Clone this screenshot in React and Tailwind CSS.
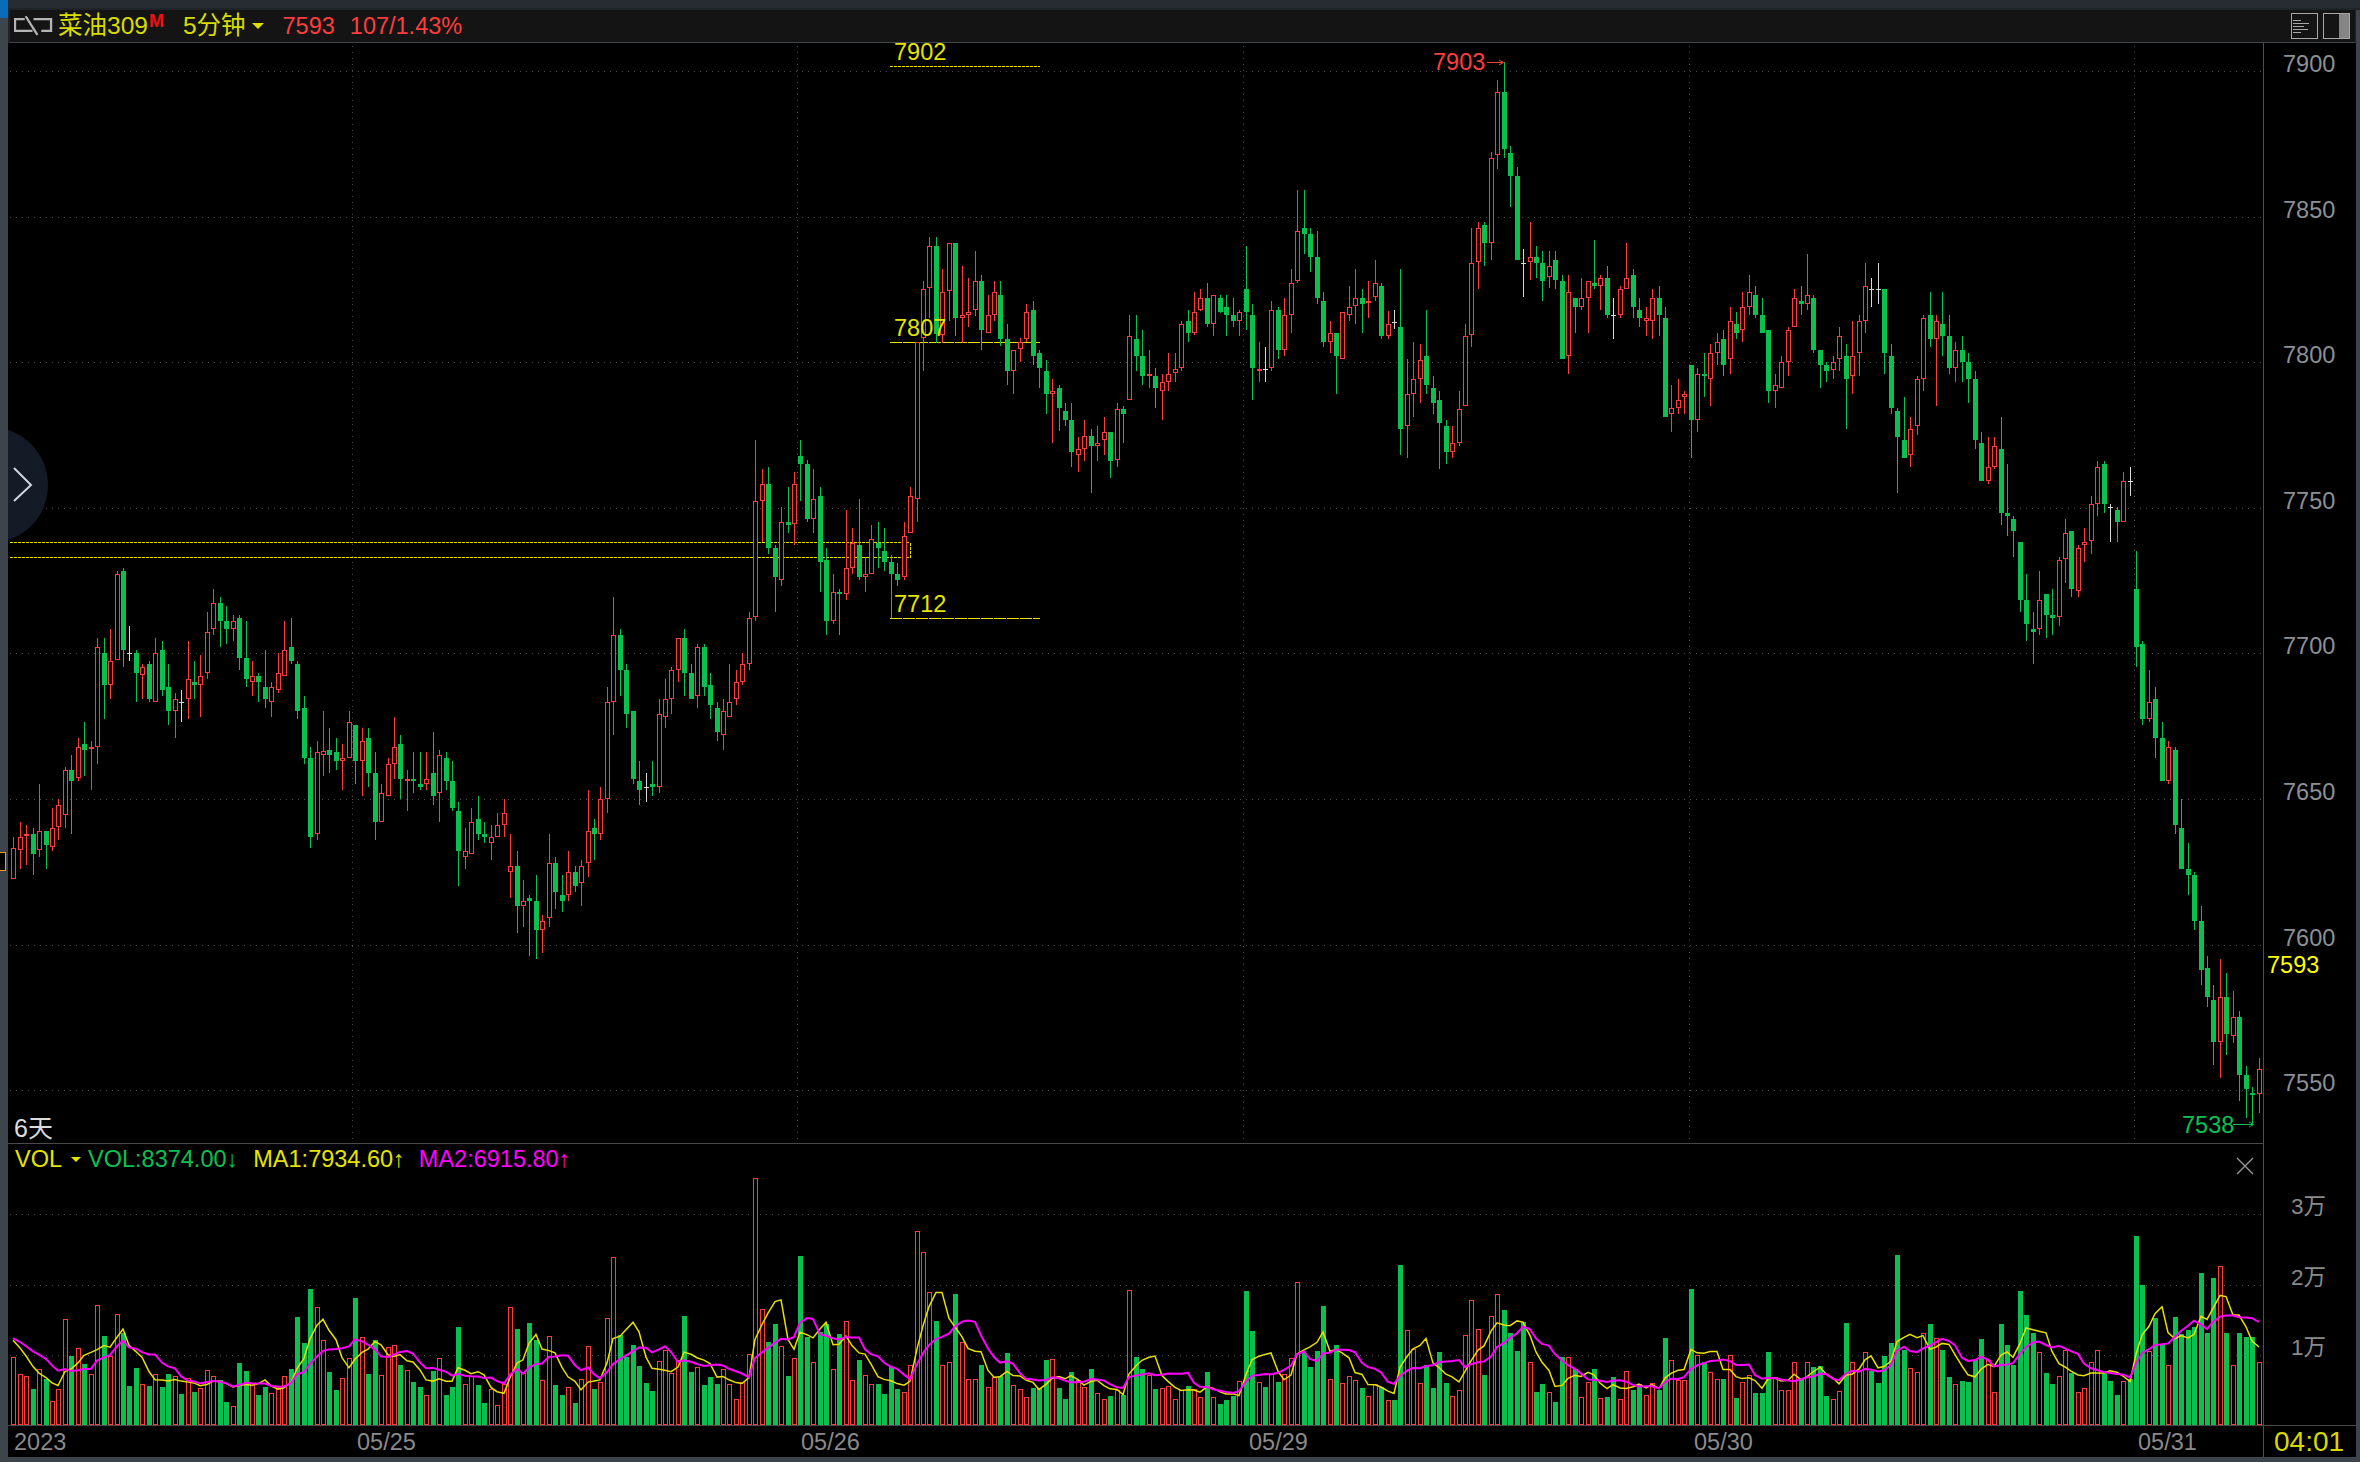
import React from "react";

const RED = "#ff3d3d";
const GREEN = "#0cc050";
const WHITE = "#d8d8d8";
const YEL = "#e4e400";

const segs = [
  [(v) => 400 + v / 3, `R1312 1345 1438 1438,R1267 1312 1351 1407,R1276 1303 1309 1396,G1285 1303 1361 1424,R1153 1294 1351 1370,G1293 1293 1335 1407,R1225 1285 1342 1352,R1198 1216 1282 1319,R1102 1111 1246 1284,G1066 1110 1142 1301,R1015 1042 1135 1142,G966 1032 1049 1128,R1024 1042 1048 1169,R714 742 1040 1091,G714 760 855 957,R687 784 854 897,R514 523 781 781,G505 514 749 801,W679 760 761 782,G751 760 819 906,R793 802 826 897,G784 793 897 906,R714 760 905 905,G724 751 870 888,G793 861 933 975,R880 898 932 1014,W870 907 908 966,R724 838 896 957,G784 846 855 897,R766 829 854 951,R637 697 818 837,R568 610 686 705,G592 610 662 741,G619 664 687 732,R646 664 686 723,G646 655 774 810,G664 774 836 861,R784 829 845 888,G820 829 846 906,G751 861 897 924,R847 862 905 951,R760 820 869 879,R664 751 827 827,G655 742 783 792,G784 793 933 957,G888 924 1074 1092,G1042 1075 1310 1344,R1024 1057 1301 1320,R933 1052 1064 1128,G985 1050 1065 1119,G1015 1057 1083 1110,R1033 1075 1082 1169,R934 967 1073 1073,G975 975 1083 1152,R985 1024 1082 1187,G985 1015 1119 1161,G1057 1119 1266 1320,R1153 1180 1265 1265,R1075 1093 1187 1187,R952 1042 1091 1137`],
  [(v) => 460 + v / 3, `G825 852 957 1018,R930 957 962 1053,G876 957 963 999,G876 972 981 990,R876 958 971 990,G816 939 1008 1035,R870 886 998 1086,G876 894 963 990,G903 963 1044 1053,G1026 1053 1173 1278,R1104 1174 1190 1227,R1045 1087 1181 1181,G1008 1077 1122 1140,G1086 1122 1131 1149,R1095 1132 1148 1200,R1059 1096 1130 1130,R1017 1060 1094 1131,R1122 1219 1235 1314,G1173 1218 1338 1419,R1260 1324 1337 1401,G1305 1314 1323 1488,G1245 1323 1410 1497,R1365 1384 1409 1479,R1122 1210 1373 1401,G1191 1209 1296 1347,G1245 1305 1323 1356,R1173 1237 1304 1323,G1218 1236 1278 1296,R1200 1219 1268 1338,R990 1114 1208 1251,G1077 1104 1122 1200,R981 1018 1121 1140,R681 727 1016 1059,R411 526 725 825,G507 525 630 708,G612 630 762 804,G753 753 957 972,G903 963 990 1035,W939 982 983 1026,G903 972 981 1008,R717 763 980 999,R657 718 770 804,R621 631 716 762,R535 535 629 666,G507 534 639 708,G612 639 717 717,R552 562 707 744,G552 561 681 708,G639 675 735 777,G726 744 816 843,R717 754 824 870,R612 727 770 770,R630 667 716 735,R580 613 665 675,R457 475 611 630,R-60 124 472 483,R27 72 122 247,G21 72 264 282,G255 264 351 456,R141 187 359 378,G81 186 195 219,R36 73 193 255,G-60 -12 12 123,G0 12 177 186,R27 118 176 219,G81 108 306 396,G264 300 483 525,R342 397 482 492,G387 396 402 525,R150 325 401 420,R204 248 323 342,G117 255 351 360,R291 343 350 396,R195 238 341 341,G186 248 264 324,G204 273 306 333`],
  [(v) => 71 + (v - 126) / 2.447, `G1310 1328 1356 1465,G1330 1358 1372 1386,R1230 1265 1364 1372,R1145 1167 1256 1256,R790 790 1173 1230,R640 660 780 860,R532 555 658 730,G532 554 770 792,R610 667 772 792,R547 547 665 737,G546 546 730 775,R603 724 730 792,R632 716 722 752,R567 640 710 725,G626 640 759 808,R673 724 766 766,R640 667 722 738,G640 674 782 800,G745 782 860 894,R809 809 859 916,R780 790 807 838,R696 716 781 790,G688 710 823 845,G809 816 853 902,G832 860 916 965,R880 909 916 1036,G894 902 951 1008,G938 958 980 995,G938 980 1058 1094,R1022 1052 1065 1107,R980 1018 1050 1080,G1002 1018 1044 1158,R994 1036 1043 1080,R973 1010 1028 1065,G1010 1010 1080 1122,R938 952 1079 1094,G946 952 965 1036,R723 775 930 930,G723 782 823 860,G760 823 872 894,R809 868 872 902,G853 872 902 951,R867 888 908 980,R816 868 887 908,R816 854 866 887,R738 746 852 860,G710 738 767 789,R667 716 767 773,R659 682 710 714,G645 682 745 752,R674 674 745 775,G674 682 716 718,G674 703 723 775,G682 723 738 752,R710 716 737 775,G554 659 716 760,G696 723 853 931,R790 854 860 888,W802 854 855 888,R688 711 853 860,G703 710 808 830,R681 724 808 823,R610 645 722 768,R416 518 640 645,G416 510 524 573,G510 524 581 617,G518 581 681 695,G667 688 788 802,R738 768 788 816,G767 767 823 916,R716 716 830 830,R653 704 722 738,R610 682 702 745,G659 682 695 767,R640 689 694 731,R589 645 680 688,G645 652 774 781,R714 746 774 781,W711 739 740 758,G610 752 1002 1066,R831 916 994 1073,R790 880 916 973,R795 832 880 938,G710 823 894 916,G872 902 938 966,G908 931 987 1100,G980 995 1058 1087,R995 1036 1058 1073,R908 952 1036 1044,R745 775 945 945,R510 596 773 802,R495 510 594 660,G495 502 546 603,R325 339 546 589,R148 177 332 367,G104 177 318 338,G310 326 382 460,G360 382 588 588,W561 596 597 680,R495 582 594 638,G554 581 596 632,G567 596 639 688,R566 604 631 658,G567 589 638 660`],
  [(v) => 180 + v / 3, `G285 303 537 537,R285 337 527 582,G354 354 381 459,R294 355 380 390,R304 304 353 459,G180 309 318 327,R285 295 317 390,G258 294 405 414,W354 406 407 477,R318 328 404 414,R189 295 326 326,G267 285 381 414,G354 390 414 441,R381 415 422 468,R327 355 422 477,G318 354 405 468,G381 414 711 711,R615 685 701 756,R597 661 683 702,R633 643 651 702,G555 555 720 834,R564 583 719 756,G519 582 588 651,R492 520 596 678,R459 487 518 555,G450 477 555 588,R381 424 536 582,G396 432 459 477,R336 382 449 486,R285 337 380 405,G318 345 405 414,G354 405 459 459,G450 450 633 669,R582 616 632 684,R528 547 623 623,R441 451 545 588,R327 355 440 440,G318 363 372 405,R222 346 371 390,G345 354 510 519,G510 510 555 624,G546 555 573 606,R528 547 571 597,R441 469 536 573,G492 528 597 747,R423 529 587 642,R405 424 518 588,R249 319 422 459,W294 328 329 381,W249 328 329 372,G327 327 519 582,G492 528 684 702,G684 693 771 939,G651 780 834 834,R711 748 824 861,R588 598 737 765,R405 415 596 633,G336 405 477 501,R405 424 476 678,G336 432 468 528,G405 468 564 582,R486 511 563 606,G468 510 546 606,G519 546 597 669,G573 597 780 807,G756 789 903 903,R771 862 902 912,R771 799 860 867,G711 807 999 1035,G852 999 1008 1068`],
  [(v) => 220 + v / 3, `G888 897 933 1011,G966 966 1140 1176,G1062 1140 1212 1263,G1176 1227 1236 1332,R1053 1141 1226 1245,G1122 1122 1185 1254,G1107 1185 1194 1245,R1011 1021 1192 1218,R897 940 1018 1089,G933 933 1107 1131,R975 985 1114 1131,R924 966 974 1026,R828 853 964 1002,R723 742 851 888,G723 732 852 879,W852 861 862 966,G861 870 906 966,R756 784 905 905,W741 784 785 828`],
  [(v) => 520 + v / 3, `G93 207 381 441,G363 372 597 615,R450 547 597 606,G501 537 654 714,G606 654 783 783,R663 682 782 792,G681 690 915 942,G837 924 1047 1047,G969 1047 1065 1125,G1056 1065 1203 1230,G1158 1203 1350 1395`],
  [(v) => 944.5 + (v - 124) / 2.797, `G155 190 271 300,G237 280 398 462,R165 271 398 497,G205 271 373 432,R254 327 380 400,G311 327 488 561,G464 488 529 610,G522 538 544 626,R441 473 543 594`],
];

const candles = segs.flatMap(([conv, s]) =>
  s.split(",").map((t) => {
    const c = t[0];
    const [h, o, b, l] = t.slice(1).split(" ").map((n) => Math.round(conv(Number(n))));
    return { c, h, o, b, l };
  })
);

const vol3 = [772,823,829,867,806,837,904,868,658,768,745,792,823,616,708,769,643,700,858,804,853,858,823,861,822,829,882,835,876,865,811,829,840,906,919,790,813,850,885,861,880,861,829,807,651,729,567,622,721,816,870,835,775,594,712,822,720,826,742,736,795,811,846,861,886,813,775,885,861,681,852,827,855,909,868,916,852,622,687,820,669,720,841,709,855,885,862,909,837,739,868];
const vol11 = [665,475,290,525,590,555,618,669,693,603,571,640,600,468,636,622,675,651,672,627,672,717,665,583,55,448,546,492,558,648,595,288,531,607,516,491,627,522,484,660,600,645,672,672,702,621,687,696,615,214,277,397,483,615,606,402,546,657,657,615,681,650,648,579,675,687,711,684,684,600,597,684,717,636,660,681,627,699,717,708,690,705,391,591,627,645,687,684,678,717,690,678,687,711,636,711,732,720,708,663,393,513,666,681,642,666,642,594,366,580,621,573,438,657,555,669,648,660];
const vol12 = [684,708,672,681,721,720,315,510,568,669,615,684,576,669,708,690,526,421,507,645,468,403,450,519,573,486,606,696,672,696,726,591,591,627,711,666,627,714,711,651,717,633,690,672,705,670,690,534,600,660,660,387,585,606,636,657,657,585,714,666,645,699,699,576,651,690,690,606,657,606,621,618,708,717,693,489,606,633,576,633,669,588,549,285,570,624,636,519,492,534,570,651,672,663,666,600,537,600,696,492,555,615,393,465,519,576,639,672,648,570,639,696,684,606,570];
const vol4 = [1320,1342,1381,1342,1335,935,1074,1258,1166,1238,1296,1163,1210,1200,1190,1040,1208,1055,1019,1208,1298,1208,1219,1219,1290];

const vols = [
  ...vol3.map((v) => (975 - v) / 3),
  ...vol11.map((v) => (795 - v) / 3),
  ...vol12.map((v) => (795 - v) / 3),
  ...vol4.map((v) => (1465 - v) / 2.797),
];

const cx = (i) => Math.round(13.3 + 6.452 * i);

const ma = (n) => {
  const pad = Array(n - 1).fill(89);
  const all = [...pad, ...vols];
  return vols.map((_, i) => {
    let s = 0;
    for (let k = 0; k < n; k++) s += all[i + n - 1 - k];
    return s / n;
  });
};

const maPts = (arr) => arr.map((m, i) => `${cx(i)},${(1425 - m).toFixed(1)}`).join(" ");

const gridY = [71, 216.6, 362, 507.7, 653.3, 799, 944.5, 1090];
const gridX = [352, 797, 1243, 1689, 2134];

function Candle({ d, i }) {
  const x = cx(i);
  if (d.c === "W") {
    return (
      <g fill={WHITE}>
        <rect x={x} y={d.h} width="1" height={d.l - d.h} />
        <rect x={x - 2} y={d.o} width="5" height="1" />
      </g>
    );
  }
  if (d.c === "G") {
    return (
      <g fill={GREEN}>
        <rect x={x} y={d.h} width="1" height={Math.max(d.l - d.h, 1)} />
        <rect x={x - 2} y={d.o} width="5" height={Math.max(d.b - d.o, 2)} />
      </g>
    );
  }
  return (
    <g>
      <rect x={x} y={d.h} width="1" height={Math.max(d.o - d.h, 0)} fill={RED} />
      <rect x={x} y={d.b} width="1" height={Math.max(d.l - d.b, 0)} fill={RED} />
      <rect x={x - 1.5} y={d.o + 0.5} width="4" height={Math.max(d.b - d.o - 1, 1)} fill="#000" stroke={RED} strokeWidth="1" />
    </g>
  );
}

function PriceChart() {
  return (
    <svg className="block w-[2255px] h-[1100px]" viewBox="8 43 2255 1100" shapeRendering="crispEdges">
      {gridY.map((y) => (
        <line key={y} x1="10" x2="2262" y1={Math.round(y) + 0.5} y2={Math.round(y) + 0.5} stroke="#4a4a4a" strokeDasharray="1 5" />
      ))}
      {gridX.map((x) => (
        <line key={x} x1={x + 0.5} x2={x + 0.5} y1="46" y2="1143" stroke="#4a4a4a" strokeDasharray="1 5" />
      ))}
      <g stroke={YEL} fill="none">
        <path d="M10 542.5H910V557.5H10" strokeDasharray="3 1" />
        <line x1="890" x2="1040" y1="66.5" y2="66.5" strokeDasharray="3 1" />
        <line x1="890" x2="1040" y1="342.5" y2="342.5" strokeDasharray="12 1" />
        <line x1="890" x2="1040" y1="618.5" y2="618.5" strokeDasharray="12 1" />
      </g>
      {candles.map((d, i) => (
        <Candle key={i} d={d} i={i} />
      ))}
      <g shapeRendering="auto" fill="none" strokeWidth="1">
        <path d="M1487 62.5H1503M1499 60L1503.5 62.5L1499 65" stroke={RED} />
        <path d="M2233 1124.5H2253M2249 1122L2253.5 1124.5L2249 1127" stroke={GREEN} />
      </g>
    </svg>
  );
}

function VolumeChart() {
  const y1 = ma(5);
  const y2 = ma(10);
  return (
    <svg className="block w-[2255px] h-[281px]" viewBox="8 1144 2255 281">
      <g shapeRendering="crispEdges">
        {[1214, 1285, 1355].map((y) => (
          <line key={y} x1="10" x2="2262" y1={y + 0.5} y2={y + 0.5} stroke="#4a4a4a" strokeDasharray="1 5" />
        ))}
        {vols.map((h, i) => {
          const x = cx(i);
          const top = Math.round(1425 - h);
          const c = candles[i] ? candles[i].c : "G";
          return c === "R" ? (
            <rect key={i} x={x - 1.5} y={top + 0.5} width="4" height={1425 - top - 1} fill="#000" stroke={RED} />
          ) : (
            <rect key={i} x={x - 2} y={top} width="5" height={1425 - top} fill={GREEN} />
          );
        })}
      </g>
      <polyline points={maPts(y1)} fill="none" stroke="#e8e000" strokeWidth="1.5" />
      <polyline points={maPts(y2)} fill="none" stroke="#ff00ff" strokeWidth="2" />
    </svg>
  );
}

function Logo() {
  return (
    <svg className="w-[39px] h-[24px] shrink-0" viewBox="0 0 40 24" fill="none" stroke="#b4b4b4" strokeWidth="2.4">
      <path d="M11 5H1V17H19" />
      <path d="M12 2L24 21" />
      <path d="M20 5H38V17H28" />
    </svg>
  );
}

const priceLabels = ["7900", "7850", "7800", "7750", "7700", "7650", "7600", "7550"];

export default function App() {
  return (
    <div className="w-[2360px] h-[1462px] flex flex-col bg-[#3d444b] overflow-hidden relative text-[23.5px] leading-[28px] [font-family:'Liberation_Sans','Noto_Sans_CJK_SC',sans-serif]">
      <div className="absolute left-0 top-0 w-[8px] h-[18px] bg-[#0a6bb8]" />
      <div className="absolute left-0 top-[852px] w-[6px] h-[19px] bg-black border border-l-0 border-[#f59e0b]" />
      <div className="h-[10px] shrink-0 bg-[#262c31] border-b-2 border-[#1f2428]" />
      <div className="flex-1 flex min-h-0">
        <div className="w-[8px] shrink-0" />
        <div className="flex-1 flex flex-col min-w-0 bg-black">
          <div className="h-[33px] shrink-0 pl-[2px] pr-[1px] bg-[#1f2428]">
            <div className="h-full flex items-center bg-[#141414] border-b border-[#42474c] pl-[4px] pr-[4px]">
              <Logo />
              <span className="ml-[5px] text-[24.5px] text-[#d8dc00]">菜油309</span>
              <span className="ml-[1px] -mt-[10px] text-[18px] leading-[16px] font-bold text-[#f01010]">M</span>
              <span className="ml-[19px] text-[24.5px] text-[#d8dc00]">5分钟</span>
              <span className="ml-[6px] w-0 h-0 border-x-[6px] border-x-transparent border-t-[6px] border-t-[#e0e000]" />
              <span className="ml-[19px] text-[#ff3d3d]">7593</span>
              <span className="ml-[15px] text-[#ff3d3d]">107/1.43%</span>
              <div className="ml-auto flex gap-[5px] pr-[1px]">
                <div className="w-[27px] h-[26px] border border-[#a8a8a8] flex flex-col justify-center gap-[2px] pl-[1px]">
                  <div className="w-[8px] h-[1px] bg-[#a8a8a8]" />
                  <div className="w-[16px] h-[1px] bg-[#a8a8a8]" />
                  <div className="w-[11px] h-[1px] bg-[#a8a8a8]" />
                  <div className="w-[15px] h-[1px] bg-[#a8a8a8]" />
                  <div className="w-[8px] h-[1px] bg-[#a8a8a8]" />
                </div>
                <div className="w-[27px] h-[26px] border border-[#a8a8a8] flex justify-end">
                  <div className="w-[10px] h-full bg-[#858585]" />
                </div>
              </div>
            </div>
          </div>
          <div className="flex-1 flex min-h-0">
            <div className="w-[2256px] shrink-0 flex flex-col border-r border-[#4a4f54]">
              <div className="h-[1101px] shrink-0 relative border-b border-[#4a4a4a]">
                <PriceChart />
                <div className="absolute left-0 top-[384px] w-[40px] h-[116px] overflow-hidden">
                  <div className="ml-[-76px] w-[116px] h-[116px] rounded-full bg-[#141a26]" />
                </div>
                <svg className="absolute left-[5px] top-[424px] w-[20px] h-[36px]" viewBox="0 0 20 36" fill="none" stroke="#cdd6dc" strokeWidth="2">
                  <path d="M1 1L18 18L1 34" />
                </svg>
                <span className="absolute left-[886px] top-[-5px] text-[#e4e400]">7902</span>
                <span className="absolute left-[886px] top-[271px] text-[#e4e400]">7807</span>
                <span className="absolute left-[886px] top-[547px] text-[#e4e400]">7712</span>
                <span className="absolute left-[1425px] top-[5px] text-[#ff3d3d]">7903</span>
                <span className="absolute left-[2174px] top-[1068px] text-[#0cc050]">7538</span>
                <span className="absolute left-[6px] top-[1071px] text-[25px] text-[#dcdcdc]">6天</span>
              </div>
              <div className="h-[282px] shrink-0 relative overflow-hidden border-b border-[#4a4a4a]">
                <VolumeChart />
                <div className="absolute left-[7px] top-[1px] flex items-center whitespace-nowrap">
                  <span className="text-[#e4e400]">VOL</span>
                  <span className="ml-[9px] w-0 h-0 border-x-[5px] border-x-transparent border-t-[5px] border-t-[#e4e400]" />
                  <span className="ml-[7px] text-[#0cc050]">VOL:8374.00↓</span>
                  <span className="ml-[15px] text-[#e4e400]">MA1:7934.60↑</span>
                  <span className="ml-[14px] text-[#ff00ff]">MA2:6915.80↑</span>
                </div>
                <svg className="absolute left-[2228px] top-[13px] w-[18px] h-[18px]" viewBox="0 0 18 18" stroke="#9a9a9a" strokeWidth="1.3">
                  <path d="M1 1L17 17M17 1L1 17" />
                </svg>
              </div>
              <div className="flex-1 flex items-center text-[#8a8a8a] pl-[6px]">
                <span className="w-[343px] shrink-0">2023</span>
                <span className="w-[444px] shrink-0">05/25</span>
                <span className="w-[448px] shrink-0">05/26</span>
                <span className="w-[445px] shrink-0">05/29</span>
                <span className="w-[444px] shrink-0">05/30</span>
                <span className="shrink-0">05/31</span>
              </div>
            </div>
            <div className="flex-1 flex flex-col min-w-0">
              <div className="h-[1101px] shrink-0 relative pt-[7px] pl-[19px] text-[#8c9094]">
                {priceLabels.map((p) => (
                  <div key={p} className="h-[145.6px]">{p}</div>
                ))}
                <span className="absolute left-[3px] top-[908px] text-[#ffff00]">7593</span>
              </div>
              <div className="h-[282px] shrink-0 flex flex-col pt-[49px] pl-[27px] text-[22.5px] text-[#8a8a8a] border-b border-[#4a4a4a]">
                <div className="h-[70.5px]">3万</div>
                <div className="h-[70.5px]">2万</div>
                <div className="h-[70.5px]">1万</div>
              </div>
              <div className="flex-1 flex items-center pl-[10px] text-[28px] text-[#d8d800]">04:01</div>
            </div>
          </div>
        </div>
        <div className="w-[4px] shrink-0" />
      </div>
      <div className="h-[5px] shrink-0" />
    </div>
  );
}
